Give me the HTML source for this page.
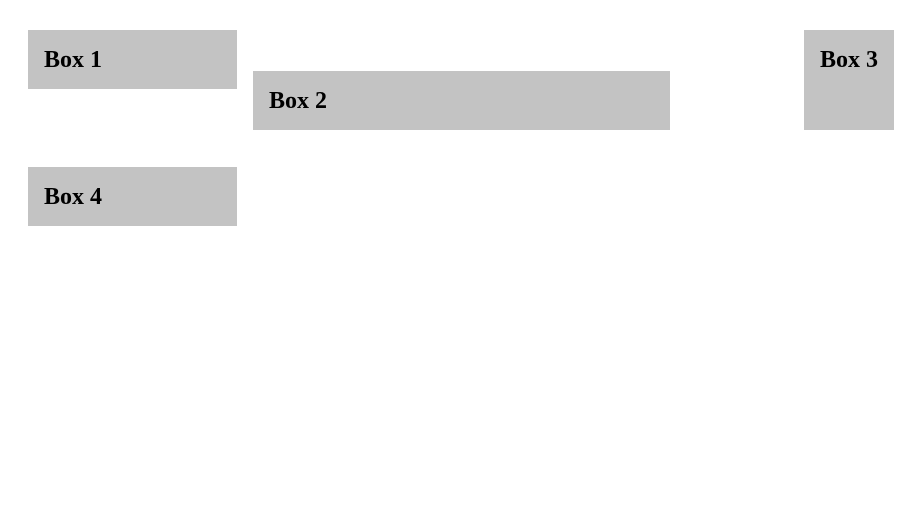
<!DOCTYPE html>
<html><head><style>
body{margin:0;background:#fff;width:924px;height:526px;position:relative;font-family:"Liberation Serif",serif;}
.b{position:absolute;background:#c3c3c3;font-weight:bold;font-size:24px;box-sizing:border-box;padding:17px 0 0 16px;line-height:26px;}
</style></head><body>
<div class="b" style="left:28px;top:30px;width:209px;height:59px">Box 1</div>
<div class="b" style="left:253px;top:71px;width:417px;height:59px">Box 2</div>
<div class="b" style="left:804px;top:30px;width:90px;height:100px">Box 3</div>
<div class="b" style="left:28px;top:167px;width:209px;height:59px">Box 4</div>
</body></html>
